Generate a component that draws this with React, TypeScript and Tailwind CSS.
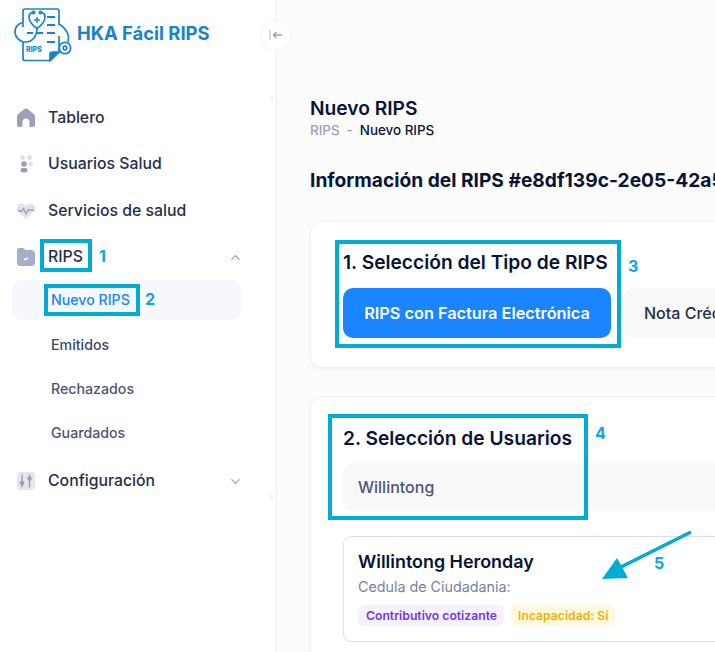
import { ChevronDown, ChevronUp } from "lucide-react";
import type { ReactNode } from "react";

const font = "font-['Inter',sans-serif]";

function Logo() {
  return (
    <svg width="60" height="58" viewBox="12 6 60 58" fill="none" stroke="#1b84c7" strokeWidth="1.700" className="shrink-0">
      {/* sheet */}
      <path d="M23 27V11a2 2 0 0 1 2-2h32a2 2 0 0 1 2 2v14M59 36v16l-9 8.500H25a2 2 0 0 1-2-2V42" />
      <path d="M50 60.500V54a2 2 0 0 1 2-2h7z" fill="#1b84c7" />
      {/* stethoscope */}
      <path d="M32 12.500c-2 .5-3 2-3 4.500 0 5 4.500 9 8 11.500 3.500-2.500 8-6.500 8-11.500 0-2.500-1-4-3-4.500" />
      <circle cx="33.500" cy="12.500" r="1.200" />
      <circle cx="40.500" cy="12.500" r="1.200" />
      <path d="M37 17v6M34 20h6" strokeWidth="1.500" />
      <path d="M37 28.500c0 8-5 13.500-11 13.500-6 0-11-4.500-11-10 0-4.500 3-8 7-9.500" />
      <path d="M59 24c7 4 11 11 9 18" />
      {/* lines */}
      <path d="M47 17h8M47 25h8M47 33h8M47 42h8M27 33h6M36 33h7" strokeWidth="1.900" />
      <circle cx="65" cy="48" r="5.700" fill="#fff" />
      <circle cx="65" cy="48" r="1.800" />
      <text x="26" y="52" fontSize="7" fontWeight="800" fill="#1b84c7" stroke="none" fontFamily="Inter, sans-serif">RIPS</text>
    </svg>
  );
}

function HomeIcon() {
  return (
    <svg width="20" height="20" viewBox="0 0 20 20">
      <path d="M1 8.200c0-.8.4-1.500 1-2L8.500 1a2.400 2.400 0 0 1 3 0L18 6.200c.600.500 1 1.200 1 2V17a2 2 0 0 1-2 2h-3.500v-5a3.500 3.500 0 0 0-7 0v5H3a2 2 0 0 1-2-2z" fill="#99a1b7" />
    </svg>
  );
}

function UsersIcon() {
  return (
    <svg width="20" height="20" viewBox="0 0 20 20" fill="#99a1b7">
      <circle cx="6.500" cy="3.500" r="2.500" opacity="0.3" />
      <circle cx="13.500" cy="3.500" r="2.500" opacity="0.3" />
      <circle cx="14.500" cy="10" r="2.500" opacity="0.3" />
      <circle cx="8" cy="10" r="2.800" />
      <rect x="4.500" y="14" width="7" height="4.500" rx="2.200" />
    </svg>
  );
}

function HeartIcon() {
  return (
    <svg width="20" height="20" viewBox="0 0 20 20" fill="none">
      <path d="M10 18 2 10.500C-.5 7 1.500 2.500 5.500 2.500c2 0 3.500 1 4.500 2.500 1-1.500 2.500-2.500 4.500-2.500 4 0 6 4.500 3.500 8z" fill="#99a1b7" opacity="0.3" />
      <path d="M2 10h4l1.500-2.500 2.500 5 2-3.500h6" stroke="#99a1b7" strokeWidth="1.300" />
    </svg>
  );
}

function FolderIcon() {
  return (
    <svg width="20" height="20" viewBox="0 0 20 20" fill="none">
      <path d="M1 3.500A2.500 2.500 0 0 1 3.500 1h3c1 0 1.500.5 2 1l1 1H15a4 4 0 0 1 4 3v10a3 3 0 0 1-3 3H4a3 3 0 0 1-3-3z" fill="#99a1b7" opacity="0.85" />
      <path d="M8 11.500l1.500 1.500 2.500-2.500" stroke="#fff" strokeWidth="1.200" />
    </svg>
  );
}

function SlidersIcon() {
  return (
    <svg width="20" height="20" viewBox="0 0 20 20" fill="#99a1b7">
      <rect x="1" y="1" width="18" height="18" rx="3" opacity="0.25" />
      <rect x="5.400" y="3.500" width="1.400" height="13" />
      <rect x="12.800" y="3.500" width="1.400" height="13" />
      <circle cx="6" cy="12" r="2.300" />
      <circle cx="13.500" cy="7.500" r="2.300" />
    </svg>
  );
}

function NavItem({ icon, label, chevron, className }: { icon: ReactNode; label: string; chevron?: "up" | "down"; className: string }) {
  return (
    <div className={`flex items-center pl-[16px] pr-[33px] ${className}`}>
      <span className="flex w-[32px] shrink-0 items-center">{icon}</span>
      <span className="flex-1 text-[15.800px] leading-[20px] font-medium text-[#252f4a]">{label}</span>
      {chevron === "up" && <ChevronUp size={15} className="text-[#99a1b7]" />}
      {chevron === "down" && <ChevronDown size={15} className="text-[#99a1b7]" />}
    </div>
  );
}

function SubItem({ label, className }: { label: string; className: string }) {
  return <div className={`pl-[51px] text-[14.200px] leading-[20px] font-medium ${className}`}>{label}</div>;
}

function Sidebar() {
  return (
    <aside className="relative w-[277px] shrink-0 border-r border-[#f1f1f4] bg-white">
      <div className="flex h-[65px] items-center pt-[4px] pl-[12px]">
        <Logo />
        <span className="mb-[2px] ml-[5px] text-[18.400px] font-bold text-[#1b84c7]">HKA Fácil RIPS</span>
      </div>
      <div className="mt-[43px]">
        <NavItem icon={<HomeIcon />} label="Tablero" className="h-[20px]" />
        <NavItem icon={<UsersIcon />} label="Usuarios Salud" className="mt-[26px] h-[20px]" />
        <NavItem icon={<HeartIcon />} label="Servicios de salud" className="mt-[27px] h-[20px]" />
        <NavItem icon={<FolderIcon />} label="RIPS" chevron="up" className="mt-[26px] h-[20px]" />
        <div className="mt-[13px] ml-[12px] flex h-[40px] w-[229px] items-center rounded-[10px] bg-[#f6f8fc] pl-[39px] text-[14.200px] font-medium text-[#1b84ff]">
          Nuevo RIPS
        </div>
        <SubItem label="Emitidos" className="mt-[15px] text-[#3b4563]" />
        <SubItem label="Rechazados" className="mt-[24px] text-[#4b5675]" />
        <SubItem label="Guardados" className="mt-[24px] text-[#4b5675]" />
        <NavItem icon={<SlidersIcon />} label="Configuración" chevron="down" className="mt-[28px] h-[20px]" />
      </div>

      {/* collapse toggle sits over the border */}
      <div className="absolute top-[19px] left-[260px] z-10 flex h-[32px] w-[32px] items-center justify-center rounded-full border border-[#f1f1f4] bg-white">
        <svg width="14" height="12" viewBox="0 0 14 12" fill="none" stroke="#99a1b7" strokeWidth="1.400">
          <path d="M1 1v10" opacity="0.4" strokeWidth="1.800" />
          <path d="M13 6H4.500M7.500 3 4.500 6l3 3" />
        </svg>
      </div>
      <div className="absolute top-[96px] left-[269px] h-0 w-0 border-x-[3px] border-b-[4px] border-x-transparent border-b-[#f1f1f4]" />
      <div className="absolute top-[495px] left-[269px] h-0 w-0 border-x-[3px] border-t-[4px] border-x-transparent border-t-[#f1f1f4]" />
    </aside>
  );
}

function Card({ children, className }: { children: ReactNode; className: string }) {
  return (
    <section className={`w-[520px] rounded-[12px] border border-[#f1f1f4] bg-white px-[32px] shadow-[0_3px_4px_rgba(0,0,0,0.03)] ${className}`}>
      {children}
    </section>
  );
}

function Main() {
  return (
    <main className="min-w-0 flex-1 overflow-hidden bg-[#fcfcfc] pt-[97px] pl-[33px] whitespace-nowrap">
      <h1 className="text-[19.200px] leading-[22px] font-semibold text-[#071437]">Nuevo RIPS</h1>
      <div className="mt-[1px] flex h-[20px] items-center text-[13.400px] font-medium">
        <span className="text-[#99a1b7]">RIPS</span>
        <span className="mx-[7px] text-[#99a1b7]">-</span>
        <span className="text-[#071437]">Nuevo RIPS</span>
      </div>
      <h2 className="mt-[28px] text-[19.200px] leading-[24px] font-bold text-[#071437]">Información del RIPS #e8df139c-2e05-42a5</h2>

      <Card className="mt-[29px] h-[147px] pt-[28px]">
        <h3 className="text-[19.200px] leading-[24px] font-semibold text-[#071437]">1. Selección del Tipo de RIPS</h3>
        <div className="mt-[14px] flex gap-[12px]">
          <button className="h-[50px] w-[268px] shrink-0 rounded-[10px] bg-[#1b84ff] text-[16.300px] font-semibold text-white">
            RIPS con Factura Electrónica
          </button>
          <button className="h-[50px] w-[240px] shrink-0 rounded-[10px] bg-[#f9f9f9] pl-[21px] text-left text-[16px] font-medium text-[#252f4a]">
            Nota Crédito
          </button>
        </div>
      </Card>

      <Card className="mt-[28px] h-[300px] pt-[29px]">
        <h3 className="text-[19.200px] leading-[24px] font-semibold text-[#071437]">2. Selección de Usuarios</h3>
        <div className="mt-[13px] flex h-[48px] w-[480px] items-center rounded-[10px] bg-[#f9f9f9] pl-[15px] text-[16px] font-medium text-[#4b5675]">
          Willintong
        </div>
        <div className="mt-[25px] h-[106px] w-[480px] rounded-[8px] border border-[#dbdfe9] bg-white pt-[13px] pl-[14px]">
          <div className="text-[17.900px] leading-[24px] font-semibold text-[#071437]">Willintong Heronday</div>
          <div className="mt-[4px] text-[14.300px] leading-[18px] text-[#78829d]">Cedula de Ciudadania:</div>
          <div className="mt-[9px] flex gap-[7px] text-[12.200px] leading-[21px] font-semibold">
            <span className="rounded-[6px] bg-[#f6f1ff] pr-[7px] pl-[8px] text-[#7239ea]">Contributivo cotizante</span>
            <span className="rounded-[6px] bg-[#fff8dd] px-[7px] text-[#f6b100]">Incapacidad: Sí</span>
          </div>
        </div>
      </Card>
    </main>
  );
}

function Marker({ className }: { className: string }) {
  return <div className={`pointer-events-none absolute border-[4px] border-[#00acd0] ${className}`} />;
}

function Num({ n, className }: { n: string; className: string }) {
  return <span className={`absolute text-[16px] leading-[20px] font-bold text-[#0ea5e9] ${className}`}>{n}</span>;
}

export default function App() {
  return (
    <div className={`relative flex h-[652px] w-[715px] overflow-hidden bg-white ${font}`}>
      <Sidebar />
      <Main />

      {/* annotations drawn on top of the screenshot */}
      <Marker className="top-[239px] left-[40px] h-[33px] w-[52px]" />
      <Marker className="top-[284px] left-[44px] h-[32px] w-[96px]" />
      <Marker className="top-[240px] left-[335px] h-[108px] w-[286px]" />
      <Marker className="top-[414px] left-[328px] h-[106px] w-[260px]" />
      <Num n="1" className="top-[246px] left-[99px]" />
      <Num n="2" className="top-[289px] left-[145px]" />
      <Num n="3" className="top-[256px] left-[628px]" />
      <Num n="4" className="top-[423px] left-[595px]" />
      <Num n="5" className="top-[553px] left-[654px]" />
      <svg className="pointer-events-none absolute top-[525px] left-[595px]" width="105" height="60" viewBox="0 0 105 60">
        <path d="M96 7 22 44" stroke="#00acd0" strokeWidth="3.500" fill="none" />
        <path d="m7 54 15-21 11 20z" fill="#00acd0" />
      </svg>
    </div>
  );
}
